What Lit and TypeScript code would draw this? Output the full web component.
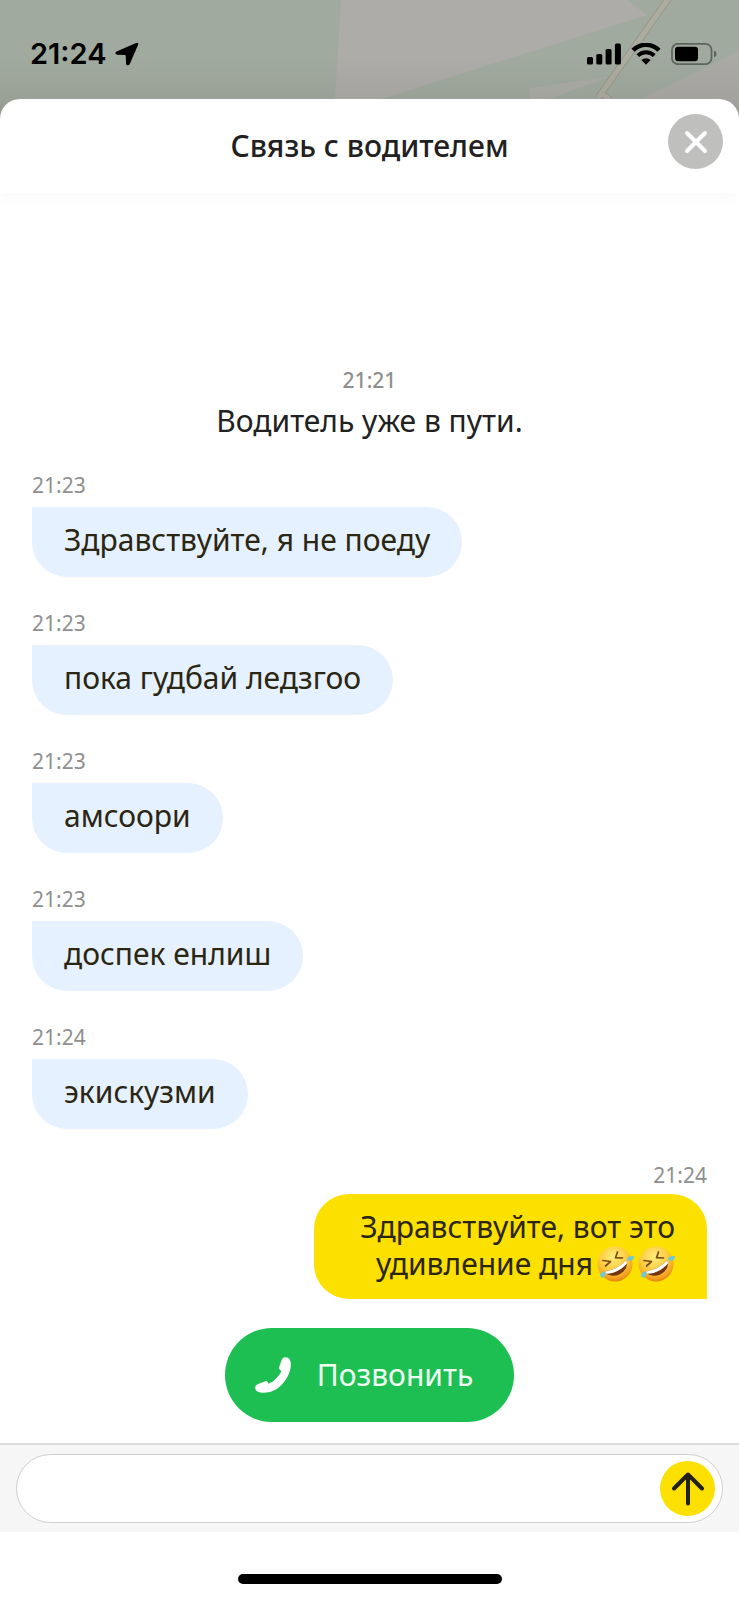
import { LitElement, html, css } from "lit";
import { customElement, property, state } from "lit/decorators.js";
import { classMap } from "lit/directives/class-map.js";

interface Message {
  time: string;
  text: string;
  own?: boolean;
  laughs?: number;
}

const MESSAGES: Message[] = [
  { time: "21:23", text: "Здравствуйте, я не поеду" },
  { time: "21:23", text: "пока гудбай ледзгоо" },
  { time: "21:23", text: "амсоори" },
  { time: "21:23", text: "доспек енлиш" },
  { time: "21:24", text: "экискузми" },
  { time: "21:24", text: "Здравствуйте, вот это удивление дня", own: true, laughs: 2 },
];

@customElement("map-backdrop")
class MapBackdrop extends LitElement {
  static styles = css`
    :host { display: block; }
    .map { display: block; width: 100%; height: 100%; }
  `;

  render() {
    return html`
      <svg class="map" viewBox="0 0 739 124" preserveAspectRatio="xMidYMin slice" aria-hidden="true">
        <defs>
          <linearGradient id="shade" x1="0" y1="0" x2="0" y2="1">
            <stop offset="0.45" stop-color="#000" stop-opacity="0" />
            <stop offset="0.8" stop-color="#000" stop-opacity="0.05" />
            <stop offset="1" stop-color="#000" stop-opacity="0.12" />
          </linearGradient>
        </defs>
        <rect width="739" height="124" fill="#a1aa9e" />
        <path d="M341 0H627L647 15L388 97L340 113L335 98Z" fill="#aeaca8" />
        <path d="M530 88L608 77L550 99H530Z" fill="#aaaca5" />
        <path d="M739 51L647 96L600 124H739Z" fill="#acaaa6" />
        <path d="M669 -2L598 98M601 93L610 100" stroke="#99988d" stroke-width="7" fill="none" />
        <path d="M669 -2L598 98M601 93L610 100" stroke="#adaca1" stroke-width="5" fill="none" />
        <rect width="739" height="124" fill="url(#shade)" />
      </svg>
    `;
  }
}

@customElement("phone-status")
class PhoneStatus extends LitElement {
  static styles = css`
    :host { display: flex; align-items: center; justify-content: space-between; color: #000; }
    .left { display: flex; align-items: center; gap: 8px; }
    .clock { font: 600 29px/36px Inter, sans-serif; }
    .right { display: flex; align-items: center; gap: 10px; }
    svg { display: block; }
  `;

  render() {
    return html`
      <div class="left">
        <span class="clock">21:24</span>
        <svg width="24" height="24" viewBox="0 0 24 24" aria-hidden="true">
          <path d="M20.500 1.200Q24 -.4 23 3L14.800 22Q13.600 24.200 11.400 22.800Q11 22.400 11 21.500L10.800 14.200Q10.700 13.200 9.800 13.100L2 12.800Q-1.200 11.200 1.600 9.600Z" fill="currentColor" />
        </svg>
      </div>
      <div class="right">
        <svg width="34" height="22" viewBox="0 0 34 22" aria-hidden="true">
          <rect x="0" y="14" width="6" height="7.5" rx="1.6" />
          <rect x="9.3" y="11" width="6" height="10.5" rx="1.6" />
          <rect x="18.6" y="6" width="6" height="15.5" rx="1.6" />
          <rect x="27.9" y="0.5" width="6" height="21" rx="1.6" />
        </svg>
        <svg width="30" height="22" viewBox="0 0 30 22" aria-hidden="true">
          <path d="M2 7.2A18.6 18.6 0 0 1 28 7.2" fill="none" stroke="#000" stroke-width="4.4" />
          <path d="M6.8 12.6A11.9 11.9 0 0 1 23.2 12.6" fill="none" stroke="#000" stroke-width="4" />
          <path d="M10.4 17A6.6 6.6 0 0 1 19.6 17L15 21.7Z" fill="#000" />
        </svg>
        <svg width="46" height="22" viewBox="0 0 46 22" aria-hidden="true">
          <rect x="1" y="0.8" width="39.5" height="20.4" rx="6" fill="none" stroke="#5f665f" stroke-width="1.8" />
          <rect x="4" y="3.8" width="23" height="14.4" rx="3" />
          <path d="M43 7.6Q45.6 8.6 45.6 11Q45.6 13.4 43 14.4Z" fill="#5f665f" />
        </svg>
      </div>
    `;
  }
}

@customElement("laugh-emoji")
class LaughEmoji extends LitElement {
  static styles = css`
    :host { display: inline-block; width: 37px; height: 36px; margin-left: 4px; vertical-align: -7px; }
    svg { display: block; overflow: visible; }
  `;

  render() {
    return html`
      <svg width="37" height="36" viewBox="0 0 37 36" role="img" aria-label="смех до слёз">
        <defs>
          <radialGradient id="face" cx="0.45" cy="0.3" r="0.72">
            <stop offset="0" stop-color="#ffee7c" />
            <stop offset="0.55" stop-color="#fccb3e" />
            <stop offset="0.85" stop-color="#f3a01f" />
            <stop offset="1" stop-color="#df7c12" />
          </radialGradient>
        </defs>
        <circle cx="18" cy="18" r="17.5" fill="url(#face)" />
        <path d="M7.500 25.500Q20 24 29.500 14Q31.500 20 26.500 25.500Q20 31.500 12 29Q9 28 7.500 25.500Z" fill="#74350f" />
        <path d="M7.500 25.500Q20 24 29.500 14L30 17.500Q21 27.500 9.500 27.700Z" fill="#fff" />
        <path d="M6 14.500L13.500 15.500L8.500 20M20.500 6L18.500 11.700L25.500 12" fill="none" stroke="#7a4a12" stroke-width="1.700" stroke-linecap="round" stroke-linejoin="round" />
        <path d="M29.500 13Q32 9.500 37 10Q37 14.300 33.500 14.800Q31 15 29.500 13Z" fill="#6cc9d8" />
        <path d="M8.300 25.500Q3.500 26 3 29.500Q3.500 32 6.300 31.500Q8.600 30.500 8.300 25.500Z" fill="#6cc9d8" />
      </svg>
    `;
  }
}

@customElement("chat-message")
class ChatMessage extends LitElement {
  @property({ attribute: false }) message!: Message;

  static styles = css`
    :host { display: block; }
    .row { display: flex; flex-direction: column; align-items: flex-start; gap: 8px; }
    .row.own { align-items: flex-end; gap: 5px; }
    .time { font-size: 21px; line-height: 28px; color: #8f8f8f; }
    .bubble {
      box-sizing: border-box;
      margin: 0;
      max-width: 85%;
      padding: 15px 32px 19px;
      border-radius: 0 35px 35px 35px;
      background: #e5f1ff;
      color: #2b2612;
      font-size: 30px;
      line-height: 36px;
    }
    .own .bubble {
      max-width: 393px;
      padding: 14px 32px 17px;
      border-radius: 35px 35px 0 35px;
      background: #fbe000;
      line-height: 37px;
      text-align: right;
    }
  `;

  render() {
    const { time, text, own = false, laughs = 0 } = this.message;
    return html`
      <div class=${classMap({ row: true, own })}>
        <time class="time">${time}</time>
        <p class="bubble">${text}${Array.from({ length: laughs }, () => html`<laugh-emoji></laugh-emoji>`)}</p>
      </div>
    `;
  }
}

@customElement("app-root")
class AppRoot extends LitElement {
  @state() private draft = "";

  static styles = css`
    :host {
      display: flex;
      flex-direction: column;
      position: relative;
      min-height: 100vh;
      background: #fff;
      font-family: "Noto Sans", sans-serif;
      color: #212121;
    }
    .map { position: absolute; top: 0; left: 0; right: 0; height: 124px; overflow: hidden; }
    .status { position: relative; height: 36px; padding: 36px 22px 27px 30px; }
    .sheet {
      position: relative;
      flex: 1;
      display: flex;
      flex-direction: column;
      border-radius: 20px 20px 0 0;
      background: #fff;
    }
    .head {
      display: grid;
      grid-template-columns: 55px 1fr 55px;
      align-items: start;
      height: 79px;
      padding: 15px 16px 0;
      border-radius: 20px 20px 0 0;
      box-shadow: 0 8px 16px rgba(0, 0, 0, 0.02);
    }
    .title { grid-column: 2; margin: 0; padding-top: 12px; text-align: center; font-size: 30px; line-height: 40px; font-weight: 500; }
    button { padding: 0; border: 0; font: inherit; cursor: pointer; }
    .close, .send { display: grid; place-items: center; width: 55px; height: 55px; border-radius: 50%; }
    .close { background: #bfbfbe; }
    .chat { flex: 1; display: flex; flex-direction: column; gap: 32px; padding: 173px 32px 29px; }
    .notice { display: flex; flex-direction: column; align-items: center; gap: 9px; }
    .notice-time { font-size: 21px; line-height: 28px; font-weight: 500; color: #8f8f8f; }
    .notice-text { margin: 0; font-size: 30px; line-height: 36px; }
    .call {
      align-self: center;
      display: flex;
      align-items: center;
      gap: 26px;
      height: 94px;
      margin-bottom: 21px;
      padding: 0 41px 0 30px;
      border-radius: 47px;
      background: #1ebf52;
      color: #effff2;
      font-size: 30px;
      line-height: 36px;
    }
    .composer { padding: 9px 16px; border-top: 2px solid #dcdcdc; background: #f6f6f6; }
    .field {
      display: flex;
      align-items: center;
      box-sizing: border-box;
      height: 69px;
      padding: 0 7px 0 31px;
      border: 1px solid #cfcfcf;
      border-radius: 35px;
      background: #fff;
    }
    .input { flex: 1; min-width: 0; height: 48px; border: 0; outline: 0; background: transparent; font: inherit; font-size: 30px; color: inherit; }
    .send { background: #fbe000; }
    .home { display: flex; justify-content: center; padding: 42px 0 16px; }
    .bar { width: 264px; height: 10px; border-radius: 5px; background: #000; }
  `;

  private onInput(e: Event) {
    this.draft = (e.target as HTMLInputElement).value;
  }

  render() {
    return html`
      <map-backdrop class="map"></map-backdrop>
      <phone-status class="status"></phone-status>
      <main class="sheet">
        <header class="head">
          <h1 class="title">Связь с водителем</h1>
          <button class="close" type="button" aria-label="Закрыть">
            <svg width="24" height="24" viewBox="0 0 24 24" aria-hidden="true">
              <path d="M3 3L21 21M21 3L3 21" stroke="#fff" stroke-width="4" stroke-linecap="round" />
            </svg>
          </button>
        </header>
        <section class="chat">
          <div class="notice">
            <time class="notice-time">21:21</time>
            <p class="notice-text">Водитель уже в пути.</p>
          </div>
          ${MESSAGES.map((m) => html`<chat-message .message=${m}></chat-message>`)}
        </section>
        <button class="call" type="button">
          <svg width="36" height="36" viewBox="0 0 36 36" aria-hidden="true">
            <path d="M30.500 .3Q36 .5 35.800 8C35.600 15 32 22.500 26.500 28C21 33.500 14.500 36 7.500 35.700Q0 35.300 .2 30.500Q.3 28.300 2.500 27.200L9.500 24.400Q11.800 23.600 12.600 25L13.600 26.800C18.500 24.600 24.300 19 26.300 14.200L24.800 12.600Q23.600 11.600 24.200 9.700L27 2.200Q27.800 .3 30.500 .3Z" fill="#fff" />
          </svg>
          <span>Позвонить</span>
        </button>
        <form class="composer" @submit=${(e: Event) => e.preventDefault()}>
          <div class="field">
            <input class="input" type="text" aria-label="Сообщение" .value=${this.draft} @input=${this.onInput} />
            <button class="send" type="submit" aria-label="Отправить">
              <svg width="34" height="36" viewBox="0 0 34 36" aria-hidden="true">
                <path d="M17 32.500V3.500M3 17.500L17 3.500L31 17.500" fill="none" stroke="#231f14" stroke-width="4" stroke-linecap="round" stroke-linejoin="round" />
              </svg>
            </button>
          </div>
        </form>
        <div class="home"><div class="bar"></div></div>
      </main>
    `;
  }
}
